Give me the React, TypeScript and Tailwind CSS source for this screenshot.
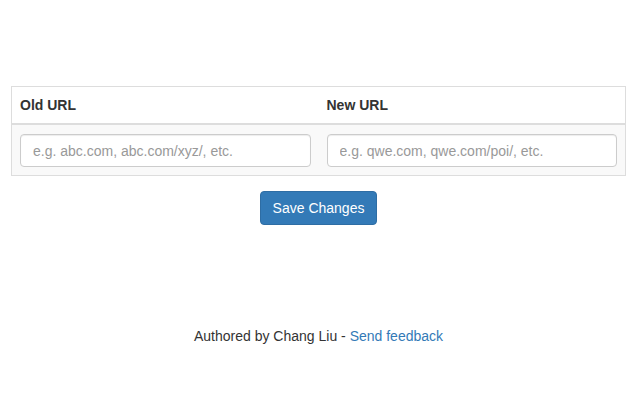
import { useState } from "react";

const font = { fontFamily: '"Liberation Sans", Arial, sans-serif' };

const App = () => {
  const [oldUrl, setOldUrl] = useState("");
  const [newUrl, setNewUrl] = useState("");

  return (
    <div
      className="w-[640px] h-[400px] bg-white text-[14px] leading-5 text-[#333]"
      style={font}
    >
      <div className="pt-[86px] pl-[11px] pr-[14px]">
        <table className="w-full border border-[#ddd] border-collapse table-fixed">
          <thead>
            <tr>
              <th className="text-left font-bold px-2 py-2 border-b-2 border-[#ddd] w-1/2">
                Old URL
              </th>
              <th className="text-left font-bold px-2 py-2 border-b-2 border-[#ddd] w-1/2">
                New URL
              </th>
            </tr>
          </thead>
          <tbody>
            <tr className="bg-[#f9f9f9]">
              <td className="px-2 pt-[9px] pb-2">
                <input
                  value={oldUrl}
                  onChange={(e) => setOldUrl(e.target.value)}
                  placeholder="e.g. abc.com, abc.com/xyz/, etc."
                  className="w-full h-[33px] px-3 bg-white border border-[#ccc] rounded-[4px] text-[14px] text-[#555] placeholder:text-[#999] shadow-[inset_0_1px_1px_rgba(0,0,0,0.075)] outline-none"
                  style={font}
                />
              </td>
              <td className="px-2 pt-[9px] pb-2">
                <input
                  value={newUrl}
                  onChange={(e) => setNewUrl(e.target.value)}
                  placeholder="e.g. qwe.com, qwe.com/poi/, etc."
                  className="w-full h-[33px] px-3 bg-white border border-[#ccc] rounded-[4px] text-[14px] text-[#555] placeholder:text-[#999] shadow-[inset_0_1px_1px_rgba(0,0,0,0.075)] outline-none"
                  style={font}
                />
              </td>
            </tr>
          </tbody>
        </table>
        <div className="flex justify-center mt-[15px]">
          <button
            className="h-[34px] px-3 bg-[#337ab7] border border-[#2e6da4] rounded-[4px] text-white text-[14px] leading-5"
            style={font}
          >
            Save Changes
          </button>
        </div>
        <p className="text-center mt-[101px]">
          Authored by Chang Liu -{" "}
          <a href="#" className="text-[#337ab7]">
            Send feedback
          </a>
        </p>
      </div>
    </div>
  );
};

export default App;
